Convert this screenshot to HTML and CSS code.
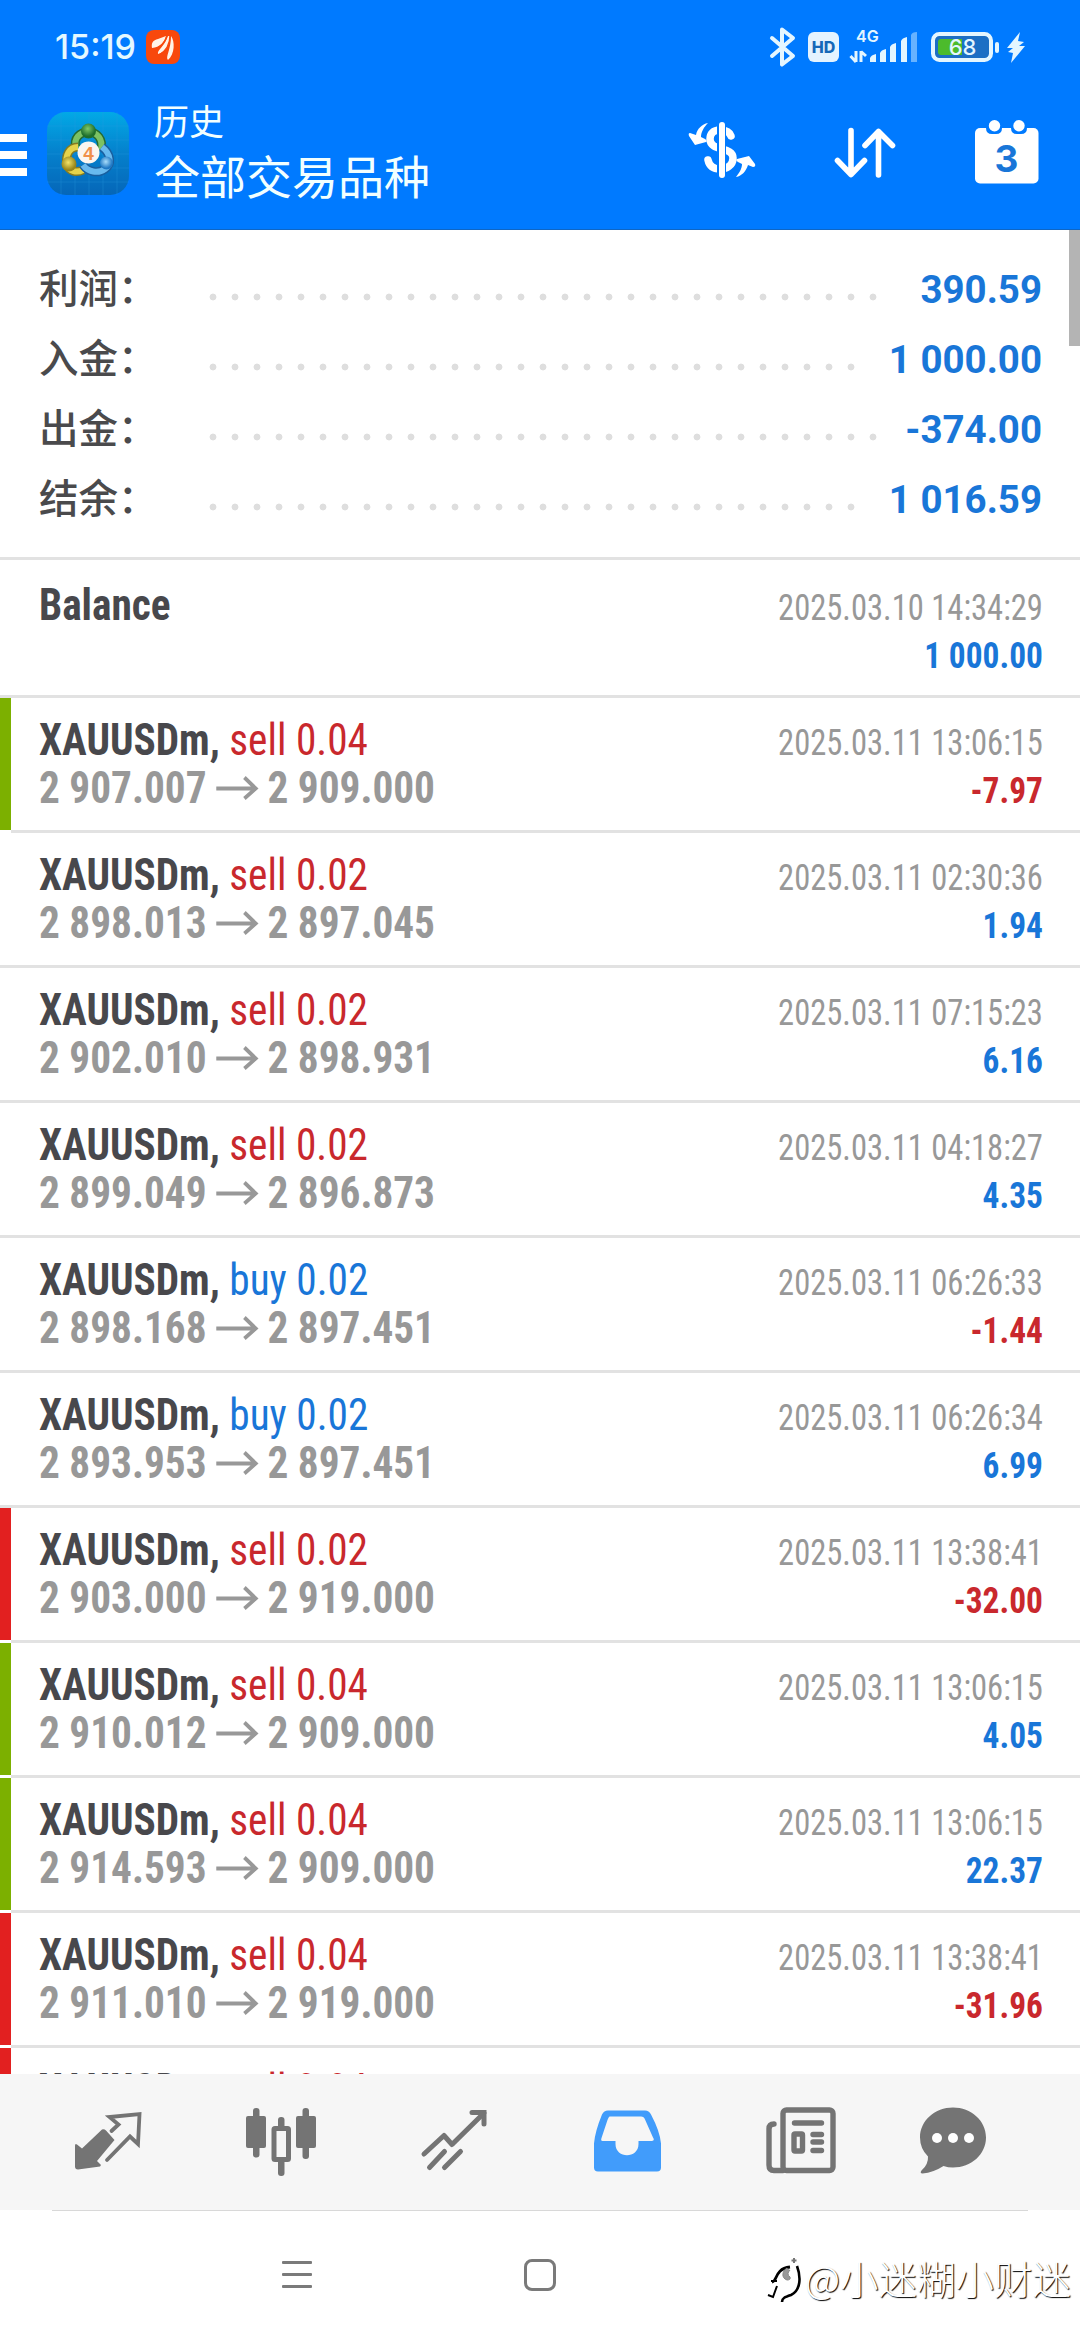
FILE: index.html
```html
<!DOCTYPE html>
<html lang="zh-CN">
<head>
<meta charset="utf-8">
<title>历史</title>
<link rel="stylesheet" href="styles.css">
</head>
<body>
<div class="screen">
  <header class="header">
    <div class="statusbar">
      <div class="status-left">
        <span class="clock">15:19</span>
        <svg class="app-badge" width="34" height="34" viewBox="0 0 34 34">
          <rect width="34" height="34" rx="8" fill="#f8480c"/>
          <g fill="#fff3e8"><path d="M6 18c-1-5 1-8 6-9l8-3c-2 7-6 11-14 12z"/><path d="M12 24c-1-4 6-7 10-18l2 0c0 8-4 16-12 18z"/><path d="M22 30c-3-3 3-10 3-24 4 5 4 18-3 24z"/></g>
          <path d="M21 6c-2 7-6 11-13 14M24 5c0 9-4 16-11 20" fill="none" stroke="#f8480c" stroke-width="1.3"/>
        </svg>
      </div>
      <svg class="status-right" width="260" height="42" viewBox="768 26 260 42">
        <path d="M772 38 L793 56 L782 64.500 V29.500 L793 38 L772 56" fill="none" stroke="#e4f6ff" stroke-width="4" stroke-linejoin="round" stroke-linecap="round"/>
        <rect x="808" y="32" width="31" height="30" rx="6" fill="#e4f3ff"/>
        <text x="823.500" y="52.500" class="hd" text-anchor="middle">HD</text>
        <text x="856" y="42" class="net">4G</text>
        <path d="M856 51v11M856 62l-5.500-6M861 62v-11M861 51.500l5 4.500" fill="none" stroke="#e4f6ff" stroke-width="3"/>
        <g fill="#e4f6ff"><path d="M870 62v-4q1-3 6-4v8z"/><path d="M880 62v-9q1-3 6-4v13z"/><path d="M890 62v-15q1-3 6-4v19z"/><path d="M901 62v-21q1-3 6-4v25z"/></g>
        <path d="M911 62v-27q1-3 6-3v30z" fill="#66b2ff"/>
        <rect x="933" y="34" width="58" height="26" rx="6.500" fill="#1c6fc4" stroke="#e4f6ff" stroke-width="4"/>
        <path d="M941 39h21v16h-21q-3 0-3-3v-10q0-3 3-3z" fill="#4cbb2c"/>
        <text x="962.500" y="55" class="pct" text-anchor="middle">68</text>
        <rect x="995" y="42" width="4" height="11" rx="2" fill="#e4f6ff"/>
        <path d="M1020 32 L1007 48 H1013 L1008 52 L1013 53 L1011 63 L1025 46 H1019 L1024 42 L1018 41z" fill="#e4f6ff"/>
      </svg>
    </div>
    <div class="toolbar">
      <div class="hamburger"><i></i><i></i><i></i></div>
      <svg class="logo" width="82" height="83" viewBox="47 112 82 83">
        <defs>
          <linearGradient id="bg" x1="0" y1="0" x2="0" y2="1"><stop offset="0" stop-color="#02a9e6"/><stop offset=".5" stop-color="#0580cc"/><stop offset="1" stop-color="#0566b8"/></linearGradient>
          <radialGradient id="gr" cx=".45" cy=".35"><stop offset="0" stop-color="#7fc968"/><stop offset="1" stop-color="#1f6f2c"/></radialGradient>
          <radialGradient id="ye" cx=".45" cy=".4"><stop offset="0" stop-color="#f4e468"/><stop offset="1" stop-color="#98861a"/></radialGradient>
          <radialGradient id="bl" cx=".45" cy=".4"><stop offset="0" stop-color="#a8dcfa"/><stop offset="1" stop-color="#1f78c4"/></radialGradient>
        </defs>
        <rect x="47" y="112" width="82" height="83" rx="19" fill="url(#bg)"/>
        <path d="M61 112v83M75 112v83M89 112v83M103 112v83M117 112v83M47 126h82M47 140h82M47 154h82M47 168h82M47 182h82" stroke="#2b9be0" stroke-width=".7" opacity=".45"/>
        <g fill="none">
          <path d="M76 148c-3-10 4-16 12.500-16s15 7 12.500 18" stroke="#256b31" stroke-width="9"/><path d="M76 148c-3-10 4-16 12.500-16s15 7 12.500 18" stroke="#7cc264" stroke-width="6"/>
          <path d="M78 147c-9 0-13 9-11 17 2 8 10 9 16 6" stroke="#857b22" stroke-width="9"/><path d="M78 147c-9 0-13 9-11 17 2 8 10 9 16 6" stroke="#e6d34a" stroke-width="6"/>
          <path d="M102 147c9 7 10 17 3 22-7 5-17 3-22-4" stroke="#1a5f9f" stroke-width="9"/><path d="M102 147c9 7 10 17 3 22-7 5-17 3-22-4" stroke="#68b9ee" stroke-width="6"/>
        </g>
        <circle cx="88.500" cy="131" r="7.500" fill="url(#gr)"/><circle cx="69" cy="164" r="7.500" fill="url(#ye)"/><circle cx="106.500" cy="163" r="6.500" fill="url(#bl)"/>
        <circle cx="88.500" cy="152.500" r="11" fill="#fbf6f0"/>
        <text x="88.500" y="159.500" text-anchor="middle" class="four">4</text>
      </svg>
      <div class="titles"><div class="title">历史</div><div class="subtitle">全部交易品种</div></div>
      <div class="actions">
        <svg width="68" height="60" viewBox="688 123 68 60">
          <path d="M731 139q-2-6-11-6c-7 0-10 4-10 9 0 13 23 7 23 19 0 8-7 11-13 11q-10 0-12-9" fill="none" stroke="#fff" stroke-width="7.500" stroke-linecap="round"/>
          <path d="M721.500 128v52" stroke="#007aff" stroke-width="9"/><path d="M722 128v50" stroke="#fff" stroke-width="6" stroke-linecap="round"/>
          <path d="M708 126c-6 1-11 6-12 12l-6-2q-2 0-1 3l6 9 11-3q2-1-1-3l-4-2c0-5 3-10 7-14z" fill="#fff"/>
          <path d="M736 180c6-1 10-6 12-12l5 2q3 0 2-3l-6-8-12 3q-2 1 1 3l4 2c0 5-3 9-6 13z" fill="#fff"/>
        </svg>
        <svg class="sort" width="62" height="54" viewBox="834 126 62 54">
          <path d="M851 130.500V174.500M837.500 160.500l13.500 14 13.500-14M878.500 175V131.500M865 145.500l13.500-14 14 14" fill="none" stroke="#fff" stroke-width="5.600" stroke-linecap="round" stroke-linejoin="round"/>
        </svg>
        <svg class="calendar" width="64" height="64" viewBox="975 120 64 64">
          <rect x="975" y="128" width="63.500" height="55.500" rx="5" fill="#fff"/>
          <g fill="#007aff"><path d="M986 126h16v2q0 6-6 6h-4q-6 0-6-6zM1011 126h16v2q0 6-6 6h-4q-6 0-6-6z"/></g>
          <circle cx="994.500" cy="125.700" r="5.700" fill="#fff"/><circle cx="1019" cy="125.700" r="5.700" fill="#fff"/>
          <text x="1006.500" y="171.500" text-anchor="middle" class="day">3</text>
        </svg>
      </div>
    </div>
  </header>

  <main class="content">
    <section class="summary">
      <div class="sum-row"><span class="label">利润：</span><span class="dots"></span><span class="value">390.59</span></div>
      <div class="sum-row"><span class="label">入金：</span><span class="dots short"></span><span class="value">1 000.00</span></div>
      <div class="sum-row"><span class="label">出金：</span><span class="dots"></span><span class="value">-374.00</span></div>
      <div class="sum-row"><span class="label">结余：</span><span class="dots short"></span><span class="value">1 016.59</span></div>
    </section>
    <section class="deals">
      <div class="deal first"><div class="main"><div><b>Balance</b></div></div><div class="side"><div class="date">2025.03.10 14:34:29</div><div class="amount">1 000.00</div></div></div>
      <div class="deal tp"><div class="main"><div><b>XAUUSDm,</b> <span class="sell">sell 0.04</span></div><div class="price">2 907.007<svg class="arrow" viewBox="0 0 45 24"><path d="M0 12.500h42M30 1.500l12 11-12 10"/></svg>2 909.000</div></div><div class="side"><div class="date">2025.03.11 13:06:15</div><div class="amount loss">-7.97</div></div></div>
      <div class="deal"><div class="main"><div><b>XAUUSDm,</b> <span class="sell">sell 0.02</span></div><div class="price">2 898.013<svg class="arrow" viewBox="0 0 45 24"><path d="M0 12.500h42M30 1.500l12 11-12 10"/></svg>2 897.045</div></div><div class="side"><div class="date">2025.03.11 02:30:36</div><div class="amount">1.94</div></div></div>
      <div class="deal"><div class="main"><div><b>XAUUSDm,</b> <span class="sell">sell 0.02</span></div><div class="price">2 902.010<svg class="arrow" viewBox="0 0 45 24"><path d="M0 12.500h42M30 1.500l12 11-12 10"/></svg>2 898.931</div></div><div class="side"><div class="date">2025.03.11 07:15:23</div><div class="amount">6.16</div></div></div>
      <div class="deal"><div class="main"><div><b>XAUUSDm,</b> <span class="sell">sell 0.02</span></div><div class="price">2 899.049<svg class="arrow" viewBox="0 0 45 24"><path d="M0 12.500h42M30 1.500l12 11-12 10"/></svg>2 896.873</div></div><div class="side"><div class="date">2025.03.11 04:18:27</div><div class="amount">4.35</div></div></div>
      <div class="deal"><div class="main"><div><b>XAUUSDm,</b> <span class="buy">buy 0.02</span></div><div class="price">2 898.168<svg class="arrow" viewBox="0 0 45 24"><path d="M0 12.500h42M30 1.500l12 11-12 10"/></svg>2 897.451</div></div><div class="side"><div class="date">2025.03.11 06:26:33</div><div class="amount loss">-1.44</div></div></div>
      <div class="deal"><div class="main"><div><b>XAUUSDm,</b> <span class="buy">buy 0.02</span></div><div class="price">2 893.953<svg class="arrow" viewBox="0 0 45 24"><path d="M0 12.500h42M30 1.500l12 11-12 10"/></svg>2 897.451</div></div><div class="side"><div class="date">2025.03.11 06:26:34</div><div class="amount">6.99</div></div></div>
      <div class="deal sl"><div class="main"><div><b>XAUUSDm,</b> <span class="sell">sell 0.02</span></div><div class="price">2 903.000<svg class="arrow" viewBox="0 0 45 24"><path d="M0 12.500h42M30 1.500l12 11-12 10"/></svg>2 919.000</div></div><div class="side"><div class="date">2025.03.11 13:38:41</div><div class="amount loss">-32.00</div></div></div>
      <div class="deal tp"><div class="main"><div><b>XAUUSDm,</b> <span class="sell">sell 0.04</span></div><div class="price">2 910.012<svg class="arrow" viewBox="0 0 45 24"><path d="M0 12.500h42M30 1.500l12 11-12 10"/></svg>2 909.000</div></div><div class="side"><div class="date">2025.03.11 13:06:15</div><div class="amount">4.05</div></div></div>
      <div class="deal tp"><div class="main"><div><b>XAUUSDm,</b> <span class="sell">sell 0.04</span></div><div class="price">2 914.593<svg class="arrow" viewBox="0 0 45 24"><path d="M0 12.500h42M30 1.500l12 11-12 10"/></svg>2 909.000</div></div><div class="side"><div class="date">2025.03.11 13:06:15</div><div class="amount">22.37</div></div></div>
      <div class="deal sl"><div class="main"><div><b>XAUUSDm,</b> <span class="sell">sell 0.04</span></div><div class="price">2 911.010<svg class="arrow" viewBox="0 0 45 24"><path d="M0 12.500h42M30 1.500l12 11-12 10"/></svg>2 919.000</div></div><div class="side"><div class="date">2025.03.11 13:38:41</div><div class="amount loss">-31.96</div></div></div>
      <div class="deal sl"><div class="main"><div><b>XAUUSDm,</b> <span class="sell">sell 0.04</span></div></div></div>
    </section>
    <div class="scroll-thumb"></div>
  </main>

  <nav class="tabs">
    <svg class="t1" width="70" height="68" viewBox="74 2108 70 68">
      <path d="M77 2145.500l5 4 20-19q2-1 4 1l8.500 9.500-17.500 21 4 4-1 1.500-22 3q-3 0-3-3v-20.500q0-3 2-1.500z" fill="#747474"/>
      <path d="M111.500 2132l7-6.500-9-7.500 30-3-1.500 30-8-7.500-23 23.500" fill="none" stroke="#747474" stroke-width="3.800" stroke-linecap="round"/>
    </svg>
    <svg class="t2" width="70" height="70" viewBox="246 2107 70 70" fill="#747474">
      <rect x="246" y="2116" width="20" height="32" rx="2"/><rect x="253" y="2108" width="6.500" height="49.500" rx="3"/>
      <rect x="296" y="2116" width="20" height="32" rx="2"/><rect x="302.500" y="2108" width="6.500" height="51" rx="3"/>
      <rect x="278" y="2117" width="6.500" height="59" rx="3"/><rect x="274" y="2128.500" width="14.500" height="31" rx="1" fill="#f6f6f6" stroke="#747474" stroke-width="5"/>
    </svg>
    <svg class="t3" width="66" height="64" viewBox="421 2109 66 64" fill="none" stroke="#747474" stroke-width="5" stroke-linecap="round" stroke-linejoin="round">
      <path d="M424 2155l20-18.500 8 9 32-31.500M429.500 2168.500l15-16M444.500 2168.500l16-16"/><path d="M472 2113.500h12V2125" stroke-linejoin="miter"/>
    </svg>
    <svg class="t4" width="68" height="62" viewBox="593 2110 68 62">
      <path d="M608 2110.500h37q4 0 6 4 9 17 10 29v24q0 4-4 4h-59q-4 0-4-4v-24q1-12 8-29 2-4 6-4z" fill="#419cfb"/>
      <path d="M609 2116.500h32q3 0 4 3l8 18q2 3-1 3.500h-13.500v3c0 15-23 15-23 0v-3h-13q-2 0-1-3l6-18q1-3 2-3.500z" fill="#f6f6f6"/>
    </svg>
    <svg class="t5" width="70" height="67" viewBox="766 2107.500 70 67" fill="none" stroke="#747474" stroke-width="5.400" stroke-linecap="round" stroke-linejoin="round">
      <rect x="783" y="2110.500" width="50" height="60.500" rx="3.500"/>
      <path d="M774 2124.500q-5 0-5 5v36q0 5.500 5 5.500h9"/>
      <path d="M794.500 2123.500h27M813 2135h8.500M813 2142.500h8.500M813 2151h8.500"/><rect x="794" y="2134.500" width="8.500" height="17" rx="1"/>
    </svg>
    <svg class="t6" width="68" height="67" viewBox="919 2107.500 68 67">
      <path d="M953 2108c18 0 33 13 33 30s-15 30-33 30q-5 0-9.500-1.500-10 6.500-21 7.500-3 0-1-3 7-6 6.500-14-8-8-8-19c0-17 15-30 33-30z" fill="#747474"/>
      <g fill="#fff"><circle cx="937" cy="2138.500" r="5"/><circle cx="953" cy="2138.500" r="5"/><circle cx="969" cy="2138.500" r="5"/></g>
    </svg>
  </nav>

  <footer class="sysnav">
    <div class="recent"><i></i><i></i><i></i></div>
    <div class="home"></div>
    <div class="watermark">
      <svg width="36" height="50" viewBox="767 2256 36 50" fill="none" stroke="#000">
        <path d="M772 2282c6-1 2-13 18-15" stroke-width="2.800"/><path d="M771 2281h6M777 2286l-4 11-5-2" stroke-width="2"/><path d="M797 2266c4 11 4 24-6 29-6 2-9 3-9 7" stroke-width="2.600"/><path d="M787 2268c-5 3-6 10 0 12q4 0 3-3-4-3 0-7" fill="#999" stroke="#888" stroke-width="1"/>
        <path d="M794 2258v5M791.500 2260.500h5" stroke="#777" stroke-width="2"/>
      </svg>
      <span class="wm">@小迷糊小财迷</span>
    </div>
  </footer>
</div>
</body>
</html>
```
FILE: styles.css
```css
* { box-sizing: border-box; }
body { margin: 0; background: #fff; font-family: Roboto, "Noto Sans CJK SC", sans-serif; }
svg { display: block; flex: none; overflow: visible; }
.screen { width: 1080px; height: 2340px; display: flex; flex-direction: column; overflow: hidden; }

.header { height: 230px; flex: none; background: #007aff; border-bottom: 1px solid #0f66c4; }
.statusbar { height: 92px; padding: 26px 52px 0 55px; display: flex; justify-content: space-between; align-items: flex-start; }
.status-left { display: flex; align-items: center; height: 42px; gap: 8px; }
.clock { width: 83px; font: 500 34px/44px Inter, sans-serif; color: #e4f8ff; white-space: nowrap; }
.hd { font: 800 16px Inter, sans-serif; fill: #1668b8; }
.net { font: 600 16px Inter, sans-serif; fill: #e4f6ff; }
.pct { font: 500 22px Inter, sans-serif; fill: #e4f6ff; }
.four { font: 700 19px "Liberation Sans", sans-serif; fill: #f0904a; }

.toolbar { height: 138px; display: flex; align-items: flex-start; }
.hamburger { width: 27px; margin: 42px 20px 0 0; display: flex; flex-direction: column; gap: 9px; }
.hamburger i { height: 8px; background: #fff; }
.logo { margin-top: 20px; }
.titles { margin: 5px 0 0 25px; color: #f2ffff; font-family: "Noto Sans CJK SC", sans-serif; }
.title { font-size: 35px; line-height: 46px; }
.subtitle { font-size: 46px; line-height: 60px; margin-top: 1px; }
.actions { margin-left: auto; padding: 28px 41px 0 0; display: flex; align-items: flex-start; }
.sort { margin: 6px 79px 0 78px; }
.day { font: 700 37px Inter, sans-serif; fill: #1976d8; }

.content { height: 1844px; flex: none; position: relative; overflow: hidden; }
.summary { height: 330px; padding: 21px 38px 0 39px; border-bottom: 3px solid #e2e2e2; }
.sum-row { height: 70px; display: flex; align-items: baseline; }
.label { width: 163px; font: 500 39.5px/70px "Noto Sans CJK SC", sans-serif; color: #4a4a4c; white-space: nowrap; }
.dots { width: 682px; height: 12px; background: radial-gradient(circle, #dedede 3px, transparent 3.8px) 0 0 / 22px 12px; }
.dots.short { width: 660px; }
.value { margin-left: auto; font: 700 38.5px/52px Roboto, sans-serif; color: #1976d8; white-space: nowrap; }

.deal { height: 135px; padding: 18px 37px 0 39px; display: flex; justify-content: space-between; border-bottom: 3px solid #e2e2e2; font: 400 44px/48px Roboto, sans-serif; font-stretch: 75%; white-space: nowrap; }
.deal.first { height: 138px; padding-top: 21px; }
.deal b { font-weight: 700; color: #48484c; }
.deal.tp, .deal.sl { border-image: linear-gradient(to right, #fff 11px, #e2e2e2 11px) 0 0 3; }
.tp { background: linear-gradient(#7cb000, #7cb000) 0 0 / 11px 100% no-repeat padding-box; }
.sl { background: linear-gradient(#e22020, #e22020) 0 0 / 11px 100% no-repeat padding-box; }
.sell { color: #c9282d; }
.buy { color: #1976d8; }
.main { transform: scaleX(0.938); transform-origin: left; }
.price { display: flex; align-items: center; font-weight: 700; color: #989898; }
.arrow { width: 45px; height: 24px; margin: 0 10px; fill: none; stroke: #989898; stroke-width: 4; }
.side { text-align: right; font-size: 36.5px; padding-top: 3px; }
.date { color: #989898; transform: scaleX(0.892); transform-origin: right; }
.amount { font-weight: 700; color: #1976d8; transform: scaleX(0.915); transform-origin: right; }
.amount.loss { color: #c9282d; }
.scroll-thumb { position: absolute; right: 0; top: 0; width: 11px; height: 116px; background: #b4b4b4; }

.tabs { height: 136px; flex: none; background: #f6f6f6; padding-top: 33px; display: grid; grid-template-columns: 172px 175px 172px 173px 153px 1fr; padding-left: 74px; }
.t4 { margin-top: 3px; }
.t3 { margin-top: 1px; }

.sysnav { height: 130px; flex: none; display: flex; align-items: flex-start; background: linear-gradient(#d8d8d8, #d8d8d8) 52px 0 / 976px 1px no-repeat; }
.recent { width: 30px; margin: 51px 0 0 282px; display: flex; flex-direction: column; gap: 9px; }
.recent i { height: 3px; background: #7a7a7a; border-radius: 1px; }
.home { width: 32px; height: 32px; margin: 49px 0 0 212px; border: 3.500px solid #7a7a7a; border-radius: 8px; }
.watermark { margin: 46px 0 0 211px; display: flex; gap: 2px; }
.wm { font: 300 38.5px/42px "Noto Sans CJK SC", sans-serif; color: #fff; text-shadow: 1px 1px 1px #000; white-space: nowrap; }
```
